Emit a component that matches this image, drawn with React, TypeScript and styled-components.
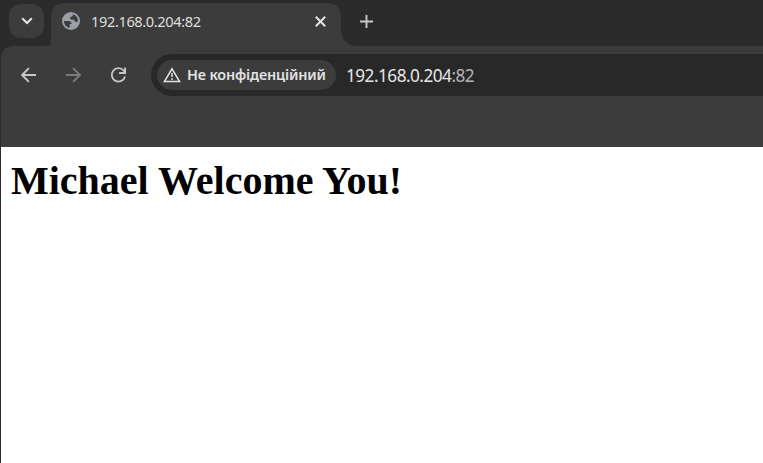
import React from "react";
import styled, { createGlobalStyle } from "styled-components";

const Global = createGlobalStyle`
  * { box-sizing: border-box; }
  html, body, #root { height: 100%; }
  body { margin: 0; background: #fff; overflow: hidden; }
`;

const Window = styled.div`
  display: flex;
  flex-direction: column;
  height: 463px;
  background: #2b2b2b;
  border-left: 1px solid #2b2b2b;
  font-family: "Noto Sans", "Open Sans", sans-serif;
`;

const TabStrip = styled.div`
  display: flex;
  align-items: flex-end;
  height: 46px;
  flex: none;
`;

const TabSearch = styled.button`
  display: flex;
  align-items: center;
  justify-content: center;
  width: 35px;
  height: 34px;
  margin: 0 0 8px 8px;
  padding: 0;
  border: 0;
  border-radius: 12px;
  background: #3c3c3c;
`;

const TabCurve = styled.div<{ $side: "left" | "right" }>`
  width: 15px;
  height: 15px;
  background: radial-gradient(
    circle at ${(p) => (p.$side === "left" ? "0 0" : "100% 0")},
    transparent 14.5px,
    #3c3c3c 15.3px
  );
`;

const Tab = styled.div`
  display: flex;
  align-items: center;
  width: 290px;
  height: 43px;
  margin-left: -8px;
  padding: 0 14px 7px 10px;
  border-radius: 13px 13px 0 0;
  background: #3c3c3c;
`;

const TabTitle = styled.span`
  flex: 1;
  margin-left: 10px;
  color: #dfdfdf;
  font-size: 14.6px;
  line-height: 20px;
  letter-spacing: -0.38px;
`;

const NewTab = styled.button`
  display: flex;
  margin: 0 0 17px 3px;
  padding: 0;
  border: 0;
  background: none;
`;

const Toolbar = styled.div`
  display: flex;
  align-items: flex-start;
  height: 101px;
  flex: none;
  padding: 8px 0 0 17px;
  border-radius: 12px 0 0 0;
  background: #3c3c3c;
`;

const NavButton = styled.button<{ $dim?: boolean }>`
  display: flex;
  align-items: center;
  width: 45px;
  height: 41px;
  padding: 0;
  border: 0;
  background: none;
  color: ${(p) => (p.$dim ? "#7b7b7b" : "#c7c7c7")};
`;

const AddressBar = styled.div`
  display: flex;
  align-items: center;
  flex: 1;
  height: 42px;
  margin-left: -2px;
  padding-left: 6px;
  border-radius: 21px 0 0 21px;
  background: #282828;
`;

const SecurityChip = styled.div`
  display: flex;
  align-items: center;
  width: 179px;
  height: 30px;
  padding-left: 6px;
  border-radius: 15px;
  background: #3c3c3c;
  color: #e3e3e3;
  white-space: nowrap;
`;

const ChipLabel = styled.span`
  margin-left: 6px;
  font-size: 14.4px;
  font-weight: 600;
  line-height: 20px;
  letter-spacing: -0.17px;
`;

const Url = styled.span`
  margin-left: 10px;
  padding-top: 2px;
  color: #e5e5e5;
  font-size: 17.2px;
  line-height: 24px;
  letter-spacing: -0.52px;
`;

const Port = styled.span`
  color: #b4b4b4;
`;

const Page = styled.main`
  flex: 1;
  padding: 11px 10px 0;
  background: #fff;
`;

const Heading = styled.h1`
  margin: 0;
  color: #000;
  font: bold 40px/46px "Liberation Serif", "Times New Roman", serif;
`;

const stroke = { fill: "none", stroke: "currentColor", strokeWidth: 1.9 };

export default function App() {
  return (
    <>
      <Global />
      <Window>
        <TabStrip>
          <TabSearch aria-label="tabs">
            <svg width="12" height="8" viewBox="0 0 12 8" fill="none" stroke="#e3e3e3" strokeWidth="2.1">
              <path d="M1.2 1.2 6 6l4.8-4.8" />
            </svg>
          </TabSearch>
          <TabCurve $side="left" />
          <Tab>
            <svg width="20" height="20" viewBox="0 0 20 20">
              <circle cx="10" cy="10" r="9" fill="#9aa0a6" />
              <path
                fill="#3c3c3c"
                d="M3 10h4.500c2 0 3.100 1.100 3.100 2.900H8.700v3.900C5.300 16.200 2.900 13.400 3 10zM11.800 3.200c3.200.9 5.200 3.500 5.200 6.800-.5.900-1.300 1.200-2.200.9-.8-.3-.9-1.200-1.500-1.700-.8-.7-2.300-.2-3.300-.7-1.200-.6-1.300-2.300.1-2.700 1.300-.3 2.100-1 1.700-2.600z"
              />
            </svg>
            <TabTitle>192.168.0.204:82</TabTitle>
            <svg width="13" height="13" viewBox="0 0 13 13" fill="none" stroke="#e3e3e3" strokeWidth="2">
              <path d="m1.800 1.800 9.400 9.400m0-9.400-9.400 9.400" />
            </svg>
          </Tab>
          <TabCurve $side="right" />
          <NewTab aria-label="new tab">
            <svg width="15" height="15" viewBox="0 0 15 15" fill="none" stroke="#c7c7c7" strokeWidth="1.900">
              <path d="M7.500 1v13M1 7.500h13" />
            </svg>
          </NewTab>
        </TabStrip>
        <Toolbar>
          <NavButton aria-label="back">
            <svg width="20" height="20" viewBox="0 0 20 20" {...stroke}>
              <path d="M18 10H4.500M10.900 3.200 4.100 10l6.800 6.800" />
            </svg>
          </NavButton>
          <NavButton aria-label="forward" $dim>
            <svg width="20" height="20" viewBox="0 0 20 20" {...stroke}>
              <path d="M3 10h13.500M10.100 3.200l6.800 6.800-6.800 6.800" />
            </svg>
          </NavButton>
          <NavButton aria-label="reload">
            <svg width="20" height="20" viewBox="0 0 20 20" {...stroke}>
              <path d="M17 11.500A6.700 6.700 0 1 1 15.600 5.500L17 7.400M17.100 2.500V8h-6" />
            </svg>
          </NavButton>
          <AddressBar>
            <SecurityChip>
              <svg width="18" height="16" viewBox="0 0 18 16" fill="none" stroke="#e3e3e3" strokeWidth="1.500">
                <path d="M9 1.800 16.600 14.600H1.400zM9 6v4M9 11.200v1.700" />
              </svg>
              <ChipLabel>Не конфіденційний</ChipLabel>
            </SecurityChip>
            <Url>
              192.168.0.204<Port>:82</Port>
            </Url>
          </AddressBar>
        </Toolbar>
        <Page>
          <Heading>Michael Welcome You!</Heading>
        </Page>
      </Window>
    </>
  );
}
